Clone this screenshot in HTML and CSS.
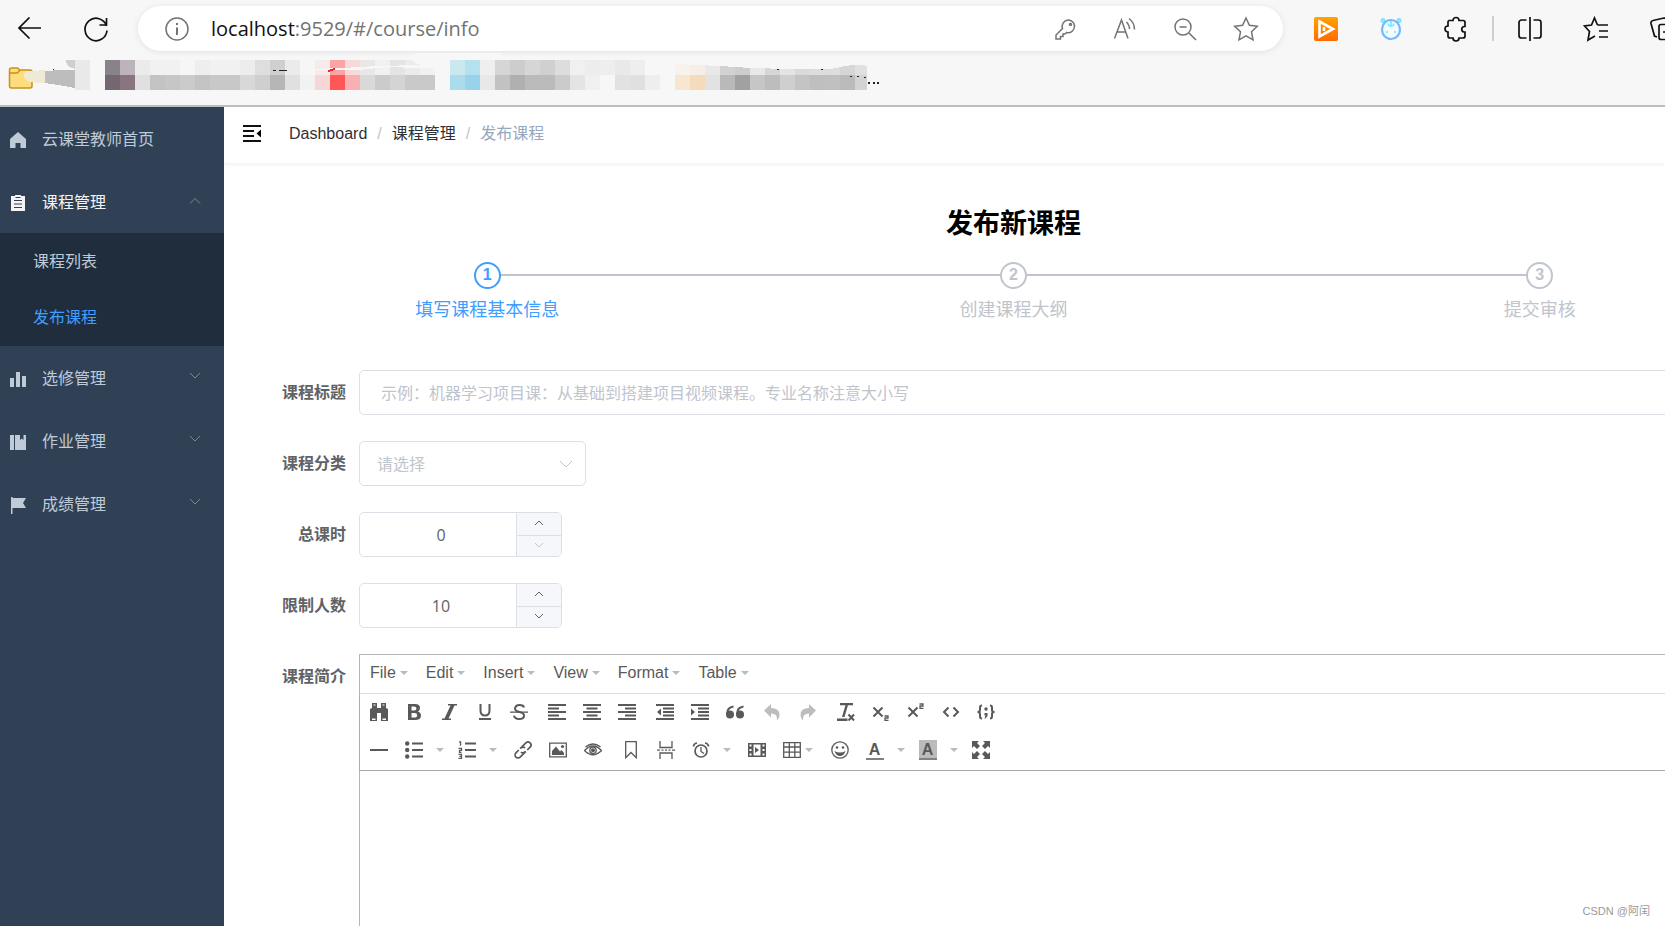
FILE: index.html
```html
<!DOCTYPE html>
<html lang="zh-CN">
<head>
<meta charset="utf-8">
<title>发布课程</title>
<link rel="stylesheet" href="styles.css">
</head>
<body>
<header class="browser">
  <div class="toolbar">
    <button class="tool back" aria-label="Back"><svg width="24" height="24" viewBox="0 0 24 24"><path d="M23 11H1M11.500 .5L1 11l10.500 10.500"/></svg></button>
    <button class="tool reload" aria-label="Refresh"><svg width="26" height="26" viewBox="0 0 26 26"><path d="M23.500 10A11 11.200 0 1 0 24 14.500M23.500 2v7h-7"/></svg></button>
    <div class="address">
      <svg class="gray" width="26" height="26" viewBox="0 0 26 26"><circle cx="13" cy="13" r="11"/><path d="M13 11.500v7.500M13 7v2" stroke-width="2"/></svg>
      <a class="url" href="#/course/info"><b>localhost</b>:9529/#/course/info</a>
      <div class="address-tools">
        <button class="tool" aria-label="Passwords"><svg width="24" height="24" viewBox="0 0 24 24"><path d="M15 3a6.300 6.300 0 0 1 6.500 6.300A6.300 6.300 0 0 1 13.500 15.500L12 17h-2v2.500H7.500V22H3v-4l6.500-6.500A6.500 6.500 0 0 1 15 3z"/><circle cx="17.500" cy="7.500" r="1"/></svg></button>
        <button class="tool" aria-label="Read aloud"><svg width="24" height="24" viewBox="0 0 24 24"><path d="M1.500 21.500L8.500 3l6.500 18.500M4 15h9M13.500 5c2 2 3 4.500 3 7M16 1.500c4 3 5.500 7 5.500 11"/></svg></button>
        <button class="tool" aria-label="Zoom out"><svg width="24" height="24" viewBox="0 0 24 24"><circle cx="10" cy="10" r="8"/><path d="M6.500 10h7M16 16l7 7"/></svg></button>
        <button class="tool" aria-label="Add to favorites"><svg width="26" height="26" viewBox="0 0 26 26"><path d="M13 2l3.400 7.300 7.900 1-5.800 5.500 1.500 8L13 19.900 6 23.800l1.500-8L1.700 10.300l7.900-1z"/></svg></button>
      </div>
    </div>
    <div class="extensions">
      <button class="tool" aria-label="Video extension"><svg width="26" height="26" viewBox="0 0 26 26"><defs><linearGradient id="orange" x2="0" y2="1"><stop stop-color="#ffa400"/><stop offset="1" stop-color="#ff6a00"/></linearGradient></defs><rect x="1" y="1" width="24" height="24" rx="2" fill="url(#orange)" stroke="none"/><path d="M6.500 10V5.500L20 13 6.500 20.500V10M11 11v4" stroke="#fff" stroke-width="2.600"/></svg></button>
      <button class="tool" aria-label="Bear extension"><svg width="24" height="26" viewBox="0 0 24 26"><g stroke="#79e3ff" stroke-width="2"><circle cx="4" cy="4.500" r="1.500"/><circle cx="20" cy="4.500" r="1.500"/></g><ellipse cx="12" cy="13.500" rx="9" ry="9.500" stroke="#73b9ff" stroke-width="2.200" fill="#f2fcff"/><path d="M12 5v6M9 7.500l1.500 3M15 7.500l-1.500 3M8 15v2M16 15v2" stroke="#6eeaff" stroke-width="1.600"/></svg></button>
      <button class="tool" aria-label="Extensions"><svg width="26" height="26" viewBox="0 0 26 26"><path d="M6 4.500h4a3 3 0 0 1 6 0h4a2 2 0 0 1 2 2v4h-1a2.800 2.800 0 0 0 0 5.500h1v4a2 2 0 0 1-2 2h-4a3 3 0 0 1-6 0H7a2 2 0 0 1-2-2v-4a3 3 0 0 1 0-6v-4a1.500 1.500 0 0 1 1-1.500z"/></svg></button>
      <span class="divider"></span>
      <button class="tool" aria-label="Split screen"><svg width="26" height="26" viewBox="0 0 26 26"><path d="M13 1v24M9.500 4H4.500a2.500 2.500 0 0 0-2.500 2.500v13A2.500 2.500 0 0 0 4.500 22h5M16.500 4h5A2.500 2.500 0 0 1 24 6.500v13a2.500 2.500 0 0 1-2.500 2.500h-5"/></svg></button>
      <button class="tool" aria-label="Favorites"><svg width="26" height="26" viewBox="0 0 26 26"><path d="M14.500 9L11.500 2 8.500 9l-7 1 5 5.500L5 24l7-4M14.500 9H25M16 15h9M16 21h9"/></svg></button>
      <button class="tool" aria-label="Collections"><svg width="26" height="26" viewBox="0 0 26 26"><path d="M8 21l-2.500-1L2 7.500Q1.500 5 4 4.500L15 2q3 0 3 4M10 10.500a2 2 0 0 1 2-2h12v15H12a2 2 0 0 1-2-2zM14 16h10"/></svg></button>
    </div>
  </div>
  <div class="bookmarks">
    <svg width="900" height="54" viewBox="0 0 900 54" shape-rendering="crispEdges">
      <g shape-rendering="auto"><path d="M9.500 19q0-2 2-2h6l2.500 2H30q2 0 2 2v14q0 2-2 2H11.500q-2 0-2-2z" fill="#ffdc7c" stroke="#c2941b" stroke-width="1.500"/><path d="M9.500 22h8l2.500-3" fill="none" stroke="#c2941b" stroke-width="1.500"/></g>
      <path d="M24 22q2-3 8-2l13-1v13q-15 0-19-3-3-3-2-7z" fill="#f0e9d5"/>
      <path d="M66 9h9v9q-9-2-9-9z" fill="#cfcfcf"/><path d="M75 9h15v30H75z" fill="#e9e9e9"/><path d="M45 20l15-1h15v18q-15-3-30-5z" fill="#bdbdbd"/>
      <g id="mosaic"></g>
      <path d="M285 19q60-2 75-3t60-2q-20-9 0-12h80q6 3 3 7h-55v9l-60-2-30 3z" fill="#f7f7f7"/>
      <path d="M273 19h3M279 19h8M53 18h1M777 18h2M821 18h2M850 25h2M857 25h2M864 26h2" stroke="#222" stroke-width="1"/>
      <path d="M328 20l7-2" stroke="#e22" stroke-width="2"/>
      <path d="M675 8h195v7q-16-2-24 0l-16 3h-40l-40-1-30-2-45-2z" fill="#f7f7f7"/>
      <path d="M868 32h2M873 32h2M877 32h2" stroke="#222" stroke-width="2"/>
    </svg>
  </div>
</header>

<div class="app">
  <nav class="sidebar">
    <a class="item" href="#/"><svg width="18" height="18" viewBox="0 0 18 18"><path d="M9 1l8 7v9h-5.500v-5h-5v5H1V8z"/></svg>云课堂教师首页</a>
    <button class="item open"><svg width="18" height="18" viewBox="0 0 18 18"><path d="M2 2h4V1h6v1h4v15H2zM5 6v1h8V6zm0 3.500v1h8v-1zM5 13v1h8v-1zM6.500 3v1h5V3z" fill-rule="evenodd"/></svg>课程管理<svg class="chev" width="12" height="8" viewBox="0 0 12 8"><path d="M1 6.500l5-5 5 5"/></svg></button>
    <div class="submenu">
      <a href="#/course/list">课程列表</a>
      <a class="active" href="#/course/info">发布课程</a>
    </div>
    <button class="item"><svg width="18" height="18" viewBox="0 0 18 18"><path d="M1 8h4v9H1zM7 2h4v15H7zM13 6h4v11h-4z"/></svg>选修管理<svg class="chev" width="12" height="8" viewBox="0 0 12 8"><path d="M1 0l5 5 5-5"/></svg></button>
    <button class="item"><svg width="18" height="18" viewBox="0 0 18 18"><path d="M1 2h4v15H1zM6 2h5v5l1.800-1.500L14.500 7V2H17v15H6z"/></svg>作业管理<svg class="chev" width="12" height="8" viewBox="0 0 12 8"><path d="M1 0l5 5 5-5"/></svg></button>
    <button class="item"><svg width="18" height="18" viewBox="0 0 18 18"><path d="M2 1h1.500v1H17l-3 5 3 5H3.500v6H2z"/></svg>成绩管理<svg class="chev" width="12" height="8" viewBox="0 0 12 8"><path d="M1 0l5 5 5-5"/></svg></button>
  </nav>

  <main class="main">
    <div class="navbar">
      <button class="hamburger" aria-label="Toggle sidebar"><svg width="18" height="18" viewBox="0 0 18 18"><path d="M0 1h18M0 6h11M0 11h11M0 16h18" fill="none" stroke="#111" stroke-width="2"/><path d="M18 4.500v8L13.500 8.500z"/></svg></button>
      <div class="crumbs"><a href="#/">Dashboard</a><i>/</i><a href="#/course">课程管理</a><i>/</i><span>发布课程</span></div>
    </div>
    <div class="content">
      <h2>发布新课程</h2>
      <ol class="steps">
        <li class="current"><span class="num">1</span><span>填写课程基本信息</span></li>
        <li><span class="num">2</span><span>创建课程大纲</span></li>
        <li><span class="num">3</span><span>提交审核</span></li>
      </ol>
      <form class="form">
        <label for="title">课程标题</label>
        <input class="field title" id="title" type="text" placeholder="示例：机器学习项目课：从基础到搭建项目视频课程。专业名称注意大小写">
        <label for="category">课程分类</label>
        <div class="select"><select class="field" id="category"><option>请选择</option></select><svg width="14" height="8" viewBox="0 0 14 8"><path d="M1 1l6 6 6-6"/></svg></div>
        <label for="hours">总课时</label>
        <div class="number"><input class="field" id="hours" type="text" value="0"><div class="spin"><button type="button" aria-label="Increase hours"><svg width="10" height="6" viewBox="0 0 10 6"><path d="M1 5l4-4 4 4"/></svg></button><button type="button" disabled aria-label="Decrease hours"><svg width="10" height="6" viewBox="0 0 10 6"><path d="M1 1l4 4 4-4"/></svg></button></div></div>
        <label for="limit">限制人数</label>
        <div class="number"><input class="field" id="limit" type="text" value="10"><div class="spin"><button type="button" aria-label="Increase limit"><svg width="10" height="6" viewBox="0 0 10 6"><path d="M1 5l4-4 4 4"/></svg></button><button type="button" aria-label="Decrease limit"><svg width="10" height="6" viewBox="0 0 10 6"><path d="M1 1l4 4 4-4"/></svg></button></div></div>
        <label for="intro">课程简介</label>
        <div class="editor">
          <div class="menubar">
            <button type="button">File</button><button type="button">Edit</button><button type="button">Insert</button><button type="button">View</button><button type="button">Format</button><button type="button">Table</button>
          </div>
          <div class="tools">
            <div class="row">
              <div class="group">
                <button type="button" aria-label="Find"><svg viewBox="0 0 18 18"><path d="M2 0h5v5h4V0h5v5l2 1v12h-7v-8H7v8H0V6l2-1zM2 15.500V17h3.500v-1.500zm10.500 0V17H16v-1.500zM3.500 1.500v1h2v-1zm9 0v1h2v-1z" fill-rule="evenodd"/></svg></button>
                <button type="button" aria-label="Bold"><svg viewBox="0 0 18 18"><path d="M3 1h7q5 0 5 4 0 2.500-2 3.500 3 1 3 4 0 4.500-6 4.500H3zm3.500 2.500v4H9q2.500 0 2.500-2t-2.500-2zm0 6.500v4.500H9.500q2.700 0 2.700-2.300T9.500 10z" fill-rule="evenodd"/></svg></button>
                <button type="button" aria-label="Italic"><svg viewBox="0 0 18 18"><path d="M8 1h9v1.500h-2.500L8.500 15.500H11V17H2v-1.500h2.500L10.500 2.500H8z"/></svg></button>
                <button type="button" aria-label="Underline"><svg viewBox="0 0 18 18"><path d="M5.500 1v6.500q0 5 4.500 5t4.500-5V1" class="s2"/><path d="M4 15h12v2H4z"/></svg></button>
                <button type="button" aria-label="Strikethrough"><svg viewBox="0 0 18 18"><path d="M14 4.500Q13.500 2 9.500 2T5 5.500q0 2.500 4.500 3.500 4.500 1 4.500 3.700 0 3.300-5 3.300-4.500 0-5-3.300" class="s2"/><path d="M0 8.500h18v1.300H0z"/></svg></button>
              </div>
              <div class="group">
                <button type="button" aria-label="Align left"><svg viewBox="0 0 18 18"><path d="M0 1h18v2H0zM0 4.500h11v2H0zM0 8h18v2H0zM0 11.500h11v2H0zM0 15h18v2H0z"/></svg></button>
                <button type="button" aria-label="Align center"><svg viewBox="0 0 18 18"><path d="M0 1h18v2H0zM3.500 4.500h11v2h-11zM0 8h18v2H0zM3.500 11.500h11v2h-11zM0 15h18v2H0z"/></svg></button>
                <button type="button" aria-label="Align right"><svg viewBox="0 0 18 18"><path d="M0 1h18v2H0zM7 4.500h11v2H7zM0 8h18v2H0zM7 11.500h11v2H7zM0 15h18v2H0z"/></svg></button>
              </div>
              <div class="group">
                <button type="button" aria-label="Outdent"><svg viewBox="0 0 18 18"><path d="M0 1h18v2H0zM7 4.500h11v2H7zM7 8h11v2H7zM7 11.500h11v2H7zM0 15h18v2H0zM5 5.500v7L1 9z"/></svg></button>
                <button type="button" aria-label="Indent"><svg viewBox="0 0 18 18"><path d="M0 1h18v2H0zM7 4.500h11v2H7zM7 8h11v2H7zM7 11.500h11v2H7zM0 15h18v2H0zM0 5.500v7L4 9z"/></svg></button>
                <button type="button" aria-label="Blockquote"><svg viewBox="0 0 18 18"><circle cx="4" cy="11.500" r="4"/><circle cx="14" cy="11.500" r="4"/><path d="M1.200 12Q.5 4.500 7.500 3.500M11.200 12Q10.500 4.500 17.500 3.500" class="s2"/></svg></button>
              </div>
              <div class="group">
                <button type="button" disabled aria-label="Undo"><svg viewBox="0 0 18 18"><path d="M7 1v4q8.500 0 8.500 7 0 3-2.500 5.500 1-7-6-7v4L0 7.500z"/></svg></button>
                <button type="button" disabled aria-label="Redo"><svg viewBox="0 0 18 18"><path d="M10 1v4q-8.500 0-8.500 7 0 3 2.500 5.500-1-7 6-7v4l7-7z"/></svg></button>
              </div>
              <div class="group">
                <button type="button" aria-label="Clear formatting"><svg viewBox="0 0 18 18"><path d="M3 0h13v2.200H3zM8.500 2H11L7.500 14H5zM0 15.500h10.500V18H0z"/><path d="M11.500 11.500l5.500 6M17 11.500l-5.500 6" class="s2"/></svg></button>
                <button type="button" aria-label="Subscript"><svg viewBox="0 0 18 18"><path d="M1.500 4.500l9 9M10.500 4.500l-9 9" class="s2"/><path d="M12.500 13h3.500v2h-3v2.300h3.500" class="s1"/></svg></button>
                <button type="button" aria-label="Superscript"><svg viewBox="0 0 18 18"><path d="M1.500 4.500l9 9M10.500 4.500l-9 9" class="s2"/><path d="M12.500 1H16v2h-3v2.300h3.500" class="s1"/></svg></button>
                <button type="button" aria-label="Source code"><svg viewBox="0 0 18 18"><path d="M6.500 4.500L2 9l4.500 4.500M11.500 4.500L16 9l-4.500 4.500" class="s2"/></svg></button>
                <button type="button" aria-label="Code sample"><svg viewBox="0 0 18 18"><path d="M5 2.500Q3 2.500 3 4.500V7Q3 9 .5 9 3 9 3 11v2.500q0 2 2 2M13 2.500q2 0 2 2V7q0 2 2.500 2-2.500 0-2.500 2v2.500q0 2-2 2" class="s2"/><circle cx="9" cy="6" r="1.700"/><path d="M7.500 10h3v3l-2 2.500h-1l1-3h-1z"/></svg></button>
              </div>
            </div>
            <div class="row">
              <div class="group">
                <button type="button" aria-label="Horizontal line"><svg viewBox="0 0 18 18"><path d="M0 8h18v2H0z"/></svg></button>
                <button type="button" aria-label="Bullet list"><svg viewBox="0 0 18 18"><circle cx="2.200" cy="2.500" r="2.200"/><circle cx="2.200" cy="9" r="2.200"/><circle cx="2.200" cy="15.500" r="2.200"/><path d="M7 1.500h11v2H7zM7 8h11v2H7zM7 14.500h11v2H7z"/></svg></button><button type="button" class="drop" aria-label="Bullet styles"></button>
                <button type="button" aria-label="Numbered list"><svg viewBox="0 0 18 18"><path d="M7 1.500h11v2H7zM7 8h11v2H7zM7 14.500h11v2H7z"/><path d="M1 .8h1.500v4M.5 7.300h3v2h-2v2h2M.5 13.300h3v4h-3M1.500 15.300h2" class="s1"/></svg></button><button type="button" class="drop" aria-label="Number styles"></button>
              </div>
              <div class="group">
                <button type="button" aria-label="Link"><svg viewBox="0 0 18 18"><g class="link" transform="rotate(-45 9 9)"><path d="M8 6H16a3 3 0 0 1 0 6h-4M10 12H2a3 3 0 0 1 0-6h4M6 9q.5 3 4 3M12 9q-.5-3-4-3"/></g></svg></button>
                <button type="button" aria-label="Image"><svg viewBox="0 0 18 18"><path d="M.7 2.200h16.600v13.600H.7z" class="s1"/><path d="M3 14V10l4-4.500 4 5 1.500-1.500L15 12v2z"/><circle cx="13.500" cy="5.500" r="1.600"/></svg></button>
                <button type="button" aria-label="Preview"><svg viewBox="0 0 18 18"><path d="M.5 9.500Q9 .5 17.500 9.500 9 18 .5 9.500zM1.500 6Q9 0 16.500 6" class="s1"/><circle cx="9" cy="9.300" r="3.200" class="s1"/><circle cx="9" cy="9.300" r="2"/></svg></button>
              </div>
              <div class="group">
                <button type="button" aria-label="Anchor"><svg viewBox="0 0 18 18"><path d="M3.700.7h10.600v16L9 11.500l-5.300 5.200z" class="s1"/></svg></button>
                <button type="button" aria-label="Page break"><svg viewBox="0 0 18 18"><path d="M3 0v6.500h12V0M3 18v-6h12v6" class="s1"/><path d="M0 9.200h3M4.500 9.200h2M8 9.200h2M11.500 9.200h2M15 9.200h3" class="s1"/></svg></button>
                <button type="button" aria-label="Insert date"><svg viewBox="0 0 18 18"><circle cx="9" cy="10" r="6" class="link"/><path d="M9 6v4.500l3 2" class="s1"/><path d="M1.500 5.500Q1.500 2.500 5 2M16.500 5.500Q16.500 2.500 13 2" class="link"/></svg></button><button type="button" class="drop" aria-label="Date formats"></button>
              </div>
              <div class="group">
                <button type="button" aria-label="Media"><svg viewBox="0 0 18 18"><path d="M0 2h18v14H0zM5.500 3.500v11h7v-11zM1.500 3.500v2h2v-2zm0 4.500v2h2V8zm0 4.500v2h2v-2zm13-9v2h2v-2zm0 4.500v2h2V8zm0 4.500v2h2v-2z" fill-rule="evenodd"/><path d="M7 6v6l4-3z"/></svg></button>
                <button type="button" class="wide" aria-label="Table"><svg viewBox="0 0 18 18"><path d="M.7 1.700h16.600v14.600H.7zM.7 6h16.600M.7 11.200h16.600M6.300 2v14M11.800 2v14" class="s1"/></svg></button>
                <button type="button" aria-label="Emoticons"><svg viewBox="0 0 18 18"><circle cx="9" cy="9" r="8.200" class="s1"/><circle cx="6" cy="6.500" r="1.300"/><circle cx="12" cy="6.500" r="1.300"/><path d="M3.500 10Q9 13 14.500 10 13 15 9 15T3.500 10z"/></svg></button>
                <button type="button" class="letter" aria-label="Text color"><span>A</span></button><button type="button" class="drop" aria-label="Text colors"></button>
                <button type="button" class="letter fill" aria-label="Background color"><span>A</span></button><button type="button" class="drop" aria-label="Background colors"></button>
                <button type="button" aria-label="Fullscreen"><svg viewBox="0 0 18 18"><path d="M0 0h7L5 2l3 3-3 3-3-3-2 2zM18 0h-7l2 2-3 3 3 3 3-3 2 2zM0 18h7l-2-2 3-3-3-3-3 3-2-2zM18 18h-7l2-2-3-3 3-3 3 3 2-2z"/></svg></button>
              </div>
            </div>
          </div>
          <textarea id="intro"></textarea>
        </div>
      </form>
    </div>
  </main>
</div>
<div class="watermark">CSDN @阿闰</div>
<script src="mosaic.js"></script>
</body>
</html>
```

FILE: styles.css
```css
* { box-sizing: border-box; }
body {
  margin: 0;
  height: 100vh;
  overflow: hidden;
  display: flex;
  flex-direction: column;
  background: #fff;
  font: 16px/24px "Liberation Sans", "Noto Sans CJK SC", sans-serif;
}
button { border: 0; padding: 0; margin: 0; background: none; font: inherit; color: inherit; }
a { color: inherit; text-decoration: none; }
svg { flex: none; display: block; }

/* Browser chrome */
.browser { flex: none; background: #f7f7f7; border-bottom: 2px solid #bdbdbd; }
.toolbar { display: flex; align-items: center; height: 51px; padding: 6px 0 0 18px; }
.tool svg, .address > svg { fill: none; stroke: #111; stroke-width: 1.7; }
.back { margin-right: 41px; }
.reload { margin-right: 29px; }
.address {
  flex: 1;
  display: flex;
  align-items: center;
  height: 45px;
  padding: 0 24px 0 26px;
  border-radius: 23px;
  background: #fff;
  box-shadow: 0 1px 6px #00000018;
}
.address > .gray, .address-tools .tool svg { stroke: #737373; stroke-width: 1.5; }
.url { margin-left: 21px; color: #737373; font: 20px/30px "Open Sans", sans-serif; }
.url b { color: #111; font-weight: 400; }
.address-tools { display: flex; gap: 36px; margin-left: auto; }
.extensions { display: flex; align-items: center; gap: 40px; flex: none; margin: 0 -10px 0 30px; }
.divider { width: 2px; height: 25px; margin: 0 -17px; background: #cfcfcf; }
.bookmarks { height: 54px; }

.app { flex: 1; min-height: 0; display: flex; }

/* Sidebar */
.sidebar { flex: none; width: 224px; background: #304156; color: #bfcbd9; }
.item { display: flex; align-items: center; gap: 15px; width: 100%; height: 63px; padding: 2px 23px 0 9px; text-align: left; }
.item svg { fill: currentColor; }
.item .chev { margin: 0 0 4px auto; fill: none; stroke: #7d8793; }
.open { color: #f4f4f5; }
.submenu { display: grid; grid-template-rows: 1fr 1fr; height: 113px; background: #1f2d3d; }
.submenu a { display: flex; align-items: center; padding: 1px 0 0 33px; }
.submenu .active { color: #409eff; }

/* Page */
.main { flex: 1; min-width: 0; overflow: hidden; }
.navbar { display: flex; align-items: center; height: 56px; padding: 0 0 2px 19px; box-shadow: 0 1px 4px #00152914; }
.crumbs { display: flex; gap: 10px; margin-left: 28px; color: #303133; }
.crumbs i { color: #c0c4cc; font-style: normal; }
.crumbs span { color: #97a8be; }
/* The content is wider than the viewport and is cut at its right edge. */
.content { margin-right: -138px; padding-top: 41px; }
h2 { margin: 0; text-align: center; font-size: 27px; line-height: 40px; color: #000; }
.steps { display: grid; grid-template-columns: repeat(3, 1fr); margin: 18px 0 0; padding: 0; list-style: none; color: #c0c4cc; font-size: 18px; }
.steps li { display: flex; flex-direction: column; align-items: center; gap: 9px; position: relative; }
.steps li + li::before { content: ""; position: absolute; top: 12px; right: 50%; width: 100%; height: 2px; background: #c0c4cc; }
.num { position: relative; z-index: 1; width: 27px; height: 27px; border: 2px solid; border-radius: 50%; background: #fff; text-align: center; font-size: 16px; font-weight: 700; line-height: 22px; }
.current { color: #409eff; }

.form { display: grid; grid-template-columns: 122px 1fr; column-gap: 13px; row-gap: 26px; padding-top: 48px; color: #606266; }
.form > label { text-align: right; font-weight: 700; line-height: 45px; }
.field { width: 100%; height: 45px; border: 1px solid #dcdfe6; border-radius: 5px; background: #fff; color: #606266; font: 16px/24px "Open Sans", "Noto Sans CJK SC", sans-serif; }
.title { padding: 0 21px; }
.title::placeholder { color: #c0c4cc; }
.select { display: flex; align-items: center; width: 227px; }
.select select { appearance: none; padding: 0 17px; color: #c0c4cc; }
.select svg { margin: 0 0 0 -27px; fill: none; stroke: #c0c4cc; }
.number { display: flex; width: 203px; }
.number input { padding: 0 56px 0 17px; text-align: center; }
.spin { display: grid; grid-template-rows: 1fr 1fr; flex: none; width: 45px; margin: 1px 1px 1px -46px; border-left: 1px solid #dcdfe6; border-radius: 0 4px 4px 0; overflow: hidden; background: #f5f7fa; }
.spin button { display: grid; place-items: center; padding-bottom: 2px; }
.spin button + button { border-top: 1px solid #dcdfe6; }
.spin svg { fill: none; stroke: #606266; }
.spin button:disabled svg { stroke: #c0c4cc; }

/* Rich text editor */
.editor { height: 320px; display: flex; flex-direction: column; border: 1px solid #b5b5b5; color: #595959; }
.menubar { display: flex; height: 39px; padding-left: 1px; border-bottom: 1px solid #dfe0e6; }
.menubar button { display: flex; align-items: center; gap: 4px; padding: 0 9px 2px; }
.menubar button::after, .drop::after, .wide::after { content: ""; border: 4px solid transparent; border-top-color: #b5bcc2; border-bottom: 0; }
.tools { border-bottom: 1px solid #aaa; box-shadow: 0 1px 2px #0002; padding-left: 1px; }
.row { display: flex; gap: 3px; height: 38px; }
.group { display: flex; }
.group button { display: flex; align-items: center; justify-content: center; width: 35px; padding-bottom: 2px; }
.group svg { width: 18px; height: 18px; fill: #595959; }
.group button:disabled svg { fill: #bdbdbd; }
.group .drop { width: 18px; }
.group .wide { width: 48px; gap: 4px; }
.group .s1, .group .s2, .link { fill: none; stroke: #595959; stroke-width: 1.3; }
.group .s2 { stroke-width: 2; }
.link { stroke-width: 1.7; }
.letter span { width: 18px; height: 20px; border-bottom: 2px solid #808080; font-weight: 700; line-height: 20px; text-align: center; }
.fill span { background: #bbb; }
.editor textarea { flex: 1; border: 0; padding: 8px; outline: 0; resize: none; background: #fff; }

.watermark { position: absolute; right: 15px; bottom: 6px; color: #999; font-size: 11px; line-height: 18px; }
```

FILE: mosaic.js
```js
// Bookmark tiles: x of the first tile, then upper and lower colours, 15px apart.
const runs = [
  [105, "8a828b bcb4ba ebebeb f1f1f1 f1f1f1 f6f6f6 eeeeee f1f1f1 f1f1f1 ededed dedede cfcfcf ebebeb f6f6f6 f6eaea faa4a6 f6dada e8e8e8 f1f1f1 e4e4e4 ebebeb f1f1f1",
        "746772 89757f e0e0e0 c3c3c3 c6c6c6 cbcbcb c3c3c3 c8c8c8 c8c8c8 d8d8d8 cfcfcf b6b6b6 e0e0e0 f2f2f2 f7d6d8 ff5658 f8b0b3 d9d9d9 cbcbcb d4d4d4 c9c9c9 c9c9c9"],
  [450, "cbe8f0 b5e0ee efefef d6d6d6 cdcdcd d6d6d6 d0d0d0 dddddd f0f0f0 ededed eeeeee e9e9e9 eeeeee f7f7f7",
        "abdcec 97d4ec e8e8e8 c2c2c2 b0b0b0 bbbbbb bbbbbb cbcbcb e4e4e4 f0f0f0 f7f7f7 e2e2e2 e0e0e0 eeeeee"],
  [675, "f7f2ec f7eee8 e8e8e8 d2d2d2 cdcdcd e8e8e8 d6d6d6 e4e4e4 dadada dddddd dddddd d6d6d6 e0e0e0",
        "f7e6d0 f5dabb e2e2e2 b9b9b9 a1a1a1 c6c6c6 bdbdbd cfcfcf c4c4c4 bfbfbf c0c0c0 bbbbbb d3d3d3"]
];
const target = document.getElementById("mosaic");
for (const [start, ...rows] of runs) {
  rows.forEach((row, r) => row.split(" ").forEach((color, i) => {
    const tile = document.createElementNS("http://www.w3.org/2000/svg", "rect");
    const box = { x: start + i * 15, y: 9 + r * 15, width: start + i * 15 === 855 ? 12 : 15, height: 15, fill: "#" + color };
    for (const key in box) tile.setAttribute(key, box[key]);
    target.append(tile);
  }));
}
```
